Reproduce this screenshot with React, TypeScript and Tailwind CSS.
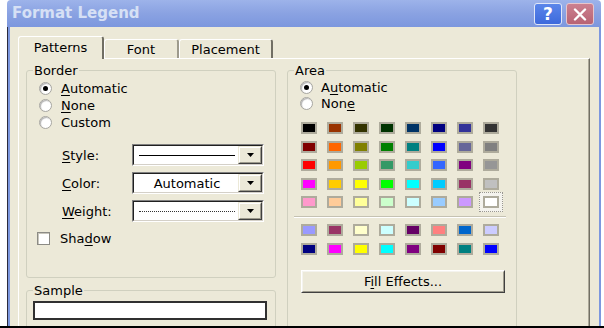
import React from "react";

const row1 = ["#000000", "#993300", "#333300", "#003300", "#003366", "#000080", "#333399", "#333333"];
const row2 = ["#800000", "#FF6600", "#808000", "#008000", "#008080", "#0000FF", "#666699", "#808080"];
const row3 = ["#FF0000", "#FF9900", "#99CC00", "#339966", "#33CCCC", "#3366FF", "#800080", "#969696"];
const row4 = ["#FF00FF", "#FFCC00", "#FFFF00", "#00FF00", "#00FFFF", "#00CCFF", "#993366", "#C0C0C0"];
const row5 = ["#FF99CC", "#FFCC99", "#FFFF99", "#CCFFCC", "#CCFFFF", "#99CCFF", "#CC99FF", "#FFFFFF"];
const row6 = ["#9999FF", "#993366", "#FFFFCC", "#CCFFFF", "#660066", "#FF8080", "#0066CC", "#CCCCFF"];
const row7 = ["#000080", "#FF00FF", "#FFFF00", "#00FFFF", "#800080", "#800000", "#008080", "#0000FF"];

function Radio({ checked }: { checked?: boolean }) {
  return (
    <span className="w-[13px] h-[13px] shrink-0 rounded-full bg-white border border-[#a7a6a0] shadow-[inset_1px_1px_1px_rgba(0,0,0,0.3)] flex items-center justify-center">
      {checked && <span className="w-[5px] h-[5px] rounded-full bg-black" />}
    </span>
  );
}

function Swatch({ c, selected }: { c: string; selected?: boolean }) {
  return (
    <div className="relative w-[16px] h-[12px]">
      {selected && (
        <div className="absolute -left-[4px] -top-[4px] w-[24px] h-[20px] border border-dotted border-[#9a9890] bg-[#f4f3ee]" />
      )}
      <div
        className="relative w-[16px] h-[12px] border-2 border-[#aeab9c]"
        style={{ backgroundColor: c }}
      />
    </div>
  );
}

function SwatchRow({ colors, last }: { colors: string[]; last?: boolean }) {
  return (
    <div className="flex gap-x-[10px]">
      {colors.map((c, i) => (
        <Swatch key={i} c={c} selected={last && i === 7} />
      ))}
    </div>
  );
}

function DropBtn() {
  return (
    <div className="w-[24px] h-full border border-t-[#ece9d8] border-l-[#ece9d8] border-r-[#404040] border-b-[#404040]">
      <div className="w-full h-full bg-[#ece9d8] border border-t-white border-l-white border-r-[#9d9a8c] border-b-[#9d9a8c] flex items-center justify-center">
        <svg width="7" height="4" viewBox="0 0 7 4">
          <polygon points="0,0 7,0 3.5,4" fill="#000" />
        </svg>
      </div>
    </div>
  );
}

function Combo({ children }: { children?: React.ReactNode }) {
  return (
    <div className="w-[132px] h-[22px] border border-t-[#808080] border-l-[#808080] border-r-white border-b-white">
      <div className="w-full h-full border border-t-[#202020] border-l-[#202020] border-r-[#d4d0c8] border-b-[#d4d0c8] bg-white flex">
        <div className="flex-1 flex items-center justify-center pl-[5px] pr-[3px]">{children}</div>
        <DropBtn />
      </div>
    </div>
  );
}

export default function App() {
  return (
    <div className="w-[604px] h-[328px] bg-white overflow-hidden flex flex-col font-['DejaVu_Sans',Verdana,sans-serif] text-[13px] leading-[15px] text-black">
      <div className="flex h-[326px]">
        <div className="w-[7px] shrink-0" />
        <div className="w-[594px] shrink-0 flex flex-col">
          {/* Title bar */}
          <div className="h-[27px] shrink-0 flex items-center pl-[5px] pr-[7px] bg-gradient-to-b from-[#9db3ea] via-[#8aa2e2] to-[#7c97de] rounded-t-[4px]">
            <span className="font-bold text-[15px] text-[#d6e0f5]">Format Legend</span>
            <div className="ml-auto flex gap-[4px] mt-[1px]">
              <div className="w-[28px] h-[22px] rounded-[3px] border border-[#dfe6f8] bg-gradient-to-b from-[#5b86ea] to-[#3d69dc] flex items-center justify-center text-white font-bold text-[17px] leading-none">
                ?
              </div>
              <div className="w-[28px] h-[22px] rounded-[3px] border border-[#e6c6cc] bg-gradient-to-b from-[#cc8090] to-[#b86474] flex items-center justify-center">
                <svg width="14" height="13" viewBox="0 0 14 13">
                  <path d="M2 1.5 L12 11.5 M12 1.5 L2 11.5" stroke="#fff" strokeWidth="2.4" strokeLinecap="round" />
                </svg>
              </div>
            </div>
          </div>

          {/* Body */}
          <div className="flex-1 min-h-0 flex border-l border-[#2b2b3c]">
            <div className="flex-1 min-h-0 flex flex-col bg-[#ece9d8] border-l-2 border-r-2 border-[#7c97de] pt-[9px] pl-[8px] pr-[9px]">
              {/* Tabs */}
              <div className="relative z-10 flex items-end h-[23px] -mb-[1px] shrink-0">
                <div className="w-[86px] h-[23px] bg-[#ece9d8] border-t border-l border-white border-r-2 border-r-[#716f64] rounded-t-[3px] flex items-center justify-center pb-[1px]">
                  Patterns
                </div>
                <div className="w-[75px] h-[19px] mb-[1px] bg-[#ece9d8] border-t border-l border-white border-r-2 border-r-[#9d9a8c] rounded-t-[3px] flex items-center justify-center">
                  Font
                </div>
                <div className="w-[94px] h-[19px] mb-[1px] bg-[#ece9d8] border-t border-l border-white border-r-2 border-r-[#716f64] rounded-t-[3px] flex items-center justify-center">
                  Placement
                </div>
              </div>

              {/* Panel */}
              <div className="flex-1 min-h-0 border-t border-l border-white border-r border-r-[#716f64] overflow-hidden">
                <div className="h-full border-r border-r-[#aca899] flex items-start pl-[7px] pt-[4px] gap-[11px]">
                  {/* Left column */}
                  <div className="w-[250px] shrink-0 flex flex-col gap-[5px]">
                    <fieldset className="h-[215px] shrink-0 border border-[#d0d0bf] rounded-[3px]">
                      <legend className="ml-[6px] px-[1px]">Border</legend>
                      <div className="pl-[12px] pt-[2px] flex flex-col">
                        <div className="h-[17px] flex items-center gap-[9px]">
                          <Radio checked />
                          <span>
                            <span className="underline underline-offset-2">A</span>utomatic
                          </span>
                        </div>
                        <div className="h-[17px] flex items-center gap-[9px]">
                          <Radio />
                          <span>
                            <span className="underline underline-offset-2">N</span>one
                          </span>
                        </div>
                        <div className="h-[17px] flex items-center gap-[9px]">
                          <Radio />
                          <span>Custom</span>
                        </div>
                      </div>
                      <div className="mt-[13px] pl-[35px] flex flex-col gap-[6px]">
                        <div className="h-[22px] flex items-center">
                          <span className="w-[70px]">
                            <span className="underline underline-offset-2">S</span>tyle:
                          </span>
                          <Combo>
                            <div className="w-full h-px bg-black" />
                          </Combo>
                        </div>
                        <div className="h-[22px] flex items-center">
                          <span className="w-[70px]">
                            <span className="underline underline-offset-2">C</span>olor:
                          </span>
                          <Combo>
                            <span>Automatic</span>
                          </Combo>
                        </div>
                        <div className="h-[22px] flex items-center">
                          <span className="w-[70px]">
                            <span className="underline underline-offset-2">W</span>eight:
                          </span>
                          <Combo>
                            <div className="w-full border-t border-dotted border-[#333]" />
                          </Combo>
                        </div>
                      </div>
                      <div className="mt-[8px] pl-[10px] h-[17px] flex items-center gap-[10px]">
                        <span className="w-[13px] h-[13px] bg-white border border-[#8c8b85] shadow-[inset_1px_1px_0_#c8c6bc]" />
                        <span>
                          Sha<span className="underline underline-offset-2">d</span>ow
                        </span>
                      </div>
                    </fieldset>

                    <fieldset className="h-[60px] shrink-0 border border-[#d0d0bf] rounded-[3px]">
                      <legend className="ml-[6px] px-[1px]">Sample</legend>
                      <div className="pl-[6px] mt-[3px]">
                        <div className="w-[234px] h-[19px] bg-white border-2 border-[#303030]" />
                      </div>
                    </fieldset>
                  </div>

                  {/* Area */}
                  <fieldset className="w-[230px] h-[320px] shrink-0 border border-[#d0d0bf] rounded-[3px]">
                    <legend className="ml-[6px] px-[1px]">Area</legend>
                    <div className="pl-[12px] pt-[1px] flex flex-col">
                      <div className="h-[16px] flex items-center gap-[8px]">
                        <Radio checked />
                        <span>
                          A<span className="underline underline-offset-2">u</span>tomatic
                        </span>
                      </div>
                      <div className="h-[16px] flex items-center gap-[8px]">
                        <Radio />
                        <span>
                          Non<span className="underline underline-offset-2">e</span>
                        </span>
                      </div>
                    </div>
                    <div className="mt-[11px] pl-[13px] flex flex-col gap-y-[6.5px]">
                      <SwatchRow colors={row1} />
                      <SwatchRow colors={row2} />
                      <SwatchRow colors={row3} />
                      <SwatchRow colors={row4} />
                      <SwatchRow colors={row5} last />
                    </div>
                    <div className="mt-[8px] ml-[6px] w-[212px] h-[2px] border-t border-[#c5c2b2] border-b border-b-white" />
                    <div className="mt-[6px] pl-[13px] flex flex-col gap-y-[7px]">
                      <SwatchRow colors={row6} />
                      <SwatchRow colors={row7} />
                    </div>
                    <div className="mt-[15px] ml-[13px] w-[204px] h-[23px] border border-t-white border-l-white border-r-[#404040] border-b-[#404040]">
                      <div className="w-full h-full border border-t-[#f4f3ee] border-l-[#f4f3ee] border-r-[#9d9a8c] border-b-[#9d9a8c] flex items-center justify-center">
                        <span>
                          F<span className="underline underline-offset-2">i</span>ll Effects...
                        </span>
                      </div>
                    </div>
                  </fieldset>
                </div>
              </div>
            </div>
          </div>
        </div>
        <div className="flex-1" />
      </div>
      <div className="h-[2px] bg-black" />
    </div>
  );
}
